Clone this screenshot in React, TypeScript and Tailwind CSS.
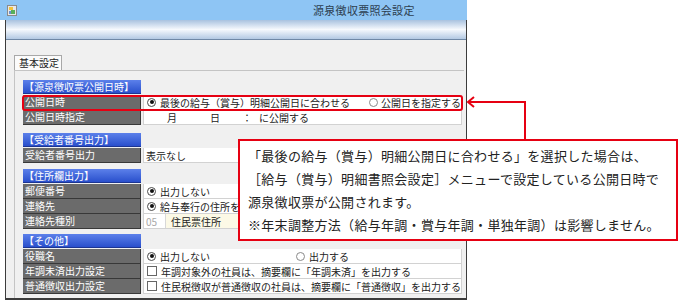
import React from 'react';

const Radio: React.FC<{ checked?: boolean }> = ({ checked }) => (
  <span
    className={`inline-flex items-center justify-center w-[9px] h-[9px] rounded-full border bg-white shrink-0 ${
      checked ? 'border-[#4a4a4a]' : 'border-[#8a8a8a]'
    }`}
  >
    {checked && <span className="w-[4px] h-[4px] rounded-full bg-[#111]" />}
  </span>
);

const Checkbox: React.FC = () => (
  <span className="inline-block w-[10px] h-[10px] border border-[#666] bg-white shrink-0" />
);

const SectionHeader: React.FC<{ title: string; className?: string }> = ({ title, className = '' }) => (
  <div
    className={`w-[118px] h-[14px] mb-[1px] bg-linear-to-b from-[#5c80ea] to-[#2a4fcc] border-b border-[#1c3592] text-white text-[10px] leading-[13px] pl-[1px] ${className}`}
  >
    {title}
  </div>
);

const Row: React.FC<{ label: string; children?: React.ReactNode }> = ({ label, children }) => (
  <div className="flex h-[15px]">
    <div className="w-[118px] bg-[#6b6b6b] border-b border-r border-[#383838] text-white text-[10px] leading-[14px] pl-[2px]">
      {label}
    </div>
    <div className="ml-[2px] w-[319px] bg-white border-b border-x border-[#d2d2d2] flex items-center text-[10px] text-[#222] whitespace-nowrap overflow-hidden">
      {children}
    </div>
  </div>
);

const AppIcon: React.FC = () => (
  <svg width="10" height="11" viewBox="0 0 10 11">
    <rect x="0.5" y="0.5" width="9" height="10" fill="#e8e8e8" stroke="#8a8a8a" />
    <rect x="2" y="2" width="4" height="3" fill="#f2c43c" />
    <rect x="4" y="5" width="4" height="4" fill="#58b05a" />
    <rect x="2" y="6" width="2" height="3" fill="#6a8fd0" />
  </svg>
);

export default function App() {
  return (
    <div className="relative w-[678px] h-[302px] bg-white overflow-hidden font-['Noto_Sans_CJK_JP','Noto_Sans',sans-serif]">
      <div className="w-[467px]">
        {/* Title bar */}
        <div className="h-[20px] bg-[#8ec5f4] flex items-center pl-[7px]">
          <AppIcon />
          <span className="ml-[296px] text-[11px] text-[#2c3e50] tracking-[0.3px]">源泉徴収票照会設定</span>
        </div>

        <div className="ml-[5px] w-[462px] h-[280px] border-x border-b-2 border-[#3c3c3c] bg-[#f0f0f0] flex flex-col">
          {/* Toolbar band */}
          <div className="h-[20px] bg-linear-to-b from-[#a9c2df] via-[#f6f9fd] to-[#b3c9e3] border-b border-[#6f88a6]" />

          <div className="flex-1 pl-[8px] pr-[2px] pt-[15px] flex flex-col">
            {/* Tab */}
            <div className="w-[48px] h-[15px] bg-[#fbfbfb] border-x border-t border-[#a8a8a8] text-[10px] leading-[14px] pl-[4px] text-[#222]">
              基本設定
            </div>

            <div className="flex-1 border-t border-l border-[#c4c4c4] pl-[8px] pt-[9px]">
              {/* 源泉徴収票公開日時 */}
              <SectionHeader title="【源泉徴収票公開日時】" />
              <Row label="公開日時">
                <div className="flex items-center pl-[3px] w-[229px]">
                  <Radio checked />
                  <span className="ml-[4px]">最後の給与（賞与）明細公開日に合わせる</span>
                </div>
                <Radio />
                <span className="ml-[3px]">公開日を指定する</span>
              </Row>
              <Row label="公開日時指定">
                <span className="pl-[23px] w-[66px]">月</span>
                <span className="w-[32px]">日</span>
                <span className="w-[17px]">：</span>
                <span>に公開する</span>
              </Row>

              {/* 受給者番号出力 */}
              <SectionHeader title="【受給者番号出力】" className="mt-[8px]" />
              <Row label="受給者番号出力">
                <span className="pl-[2px]">表示なし</span>
              </Row>

              {/* 住所欄出力 */}
              <SectionHeader title="【住所欄出力】" className="mt-[6px]" />
              <Row label="郵便番号">
                <div className="flex items-center pl-[3px]">
                  <Radio checked />
                  <span className="ml-[4px]">出力しない</span>
                </div>
              </Row>
              <Row label="連絡先">
                <div className="flex items-center pl-[3px]">
                  <Radio checked />
                  <span className="ml-[4px]">給与奉行の住所を</span>
                </div>
              </Row>
              <Row label="連絡先種別">
                <span className="pl-[2px] w-[21px] text-[#a8a8a8]">05</span>
                <div className="h-full w-[140px] bg-[#fcf9e6] border-l border-[#d8d8d8] pl-[5px] flex items-center">
                  住民票住所
                </div>
              </Row>

              {/* その他 */}
              <SectionHeader title="【その他】" className="mt-[5px]" />
              <Row label="役職名">
                <div className="flex items-center pl-[3px] w-[152px]">
                  <Radio checked />
                  <span className="ml-[4px]">出力しない</span>
                </div>
                <Radio />
                <span className="ml-[4px]">出力する</span>
              </Row>
              <Row label="年調未済出力設定">
                <span className="pl-[3px] flex items-center">
                  <Checkbox />
                </span>
                <span className="ml-[4px]">年調対象外の社員は、摘要欄に「年調未済」を出力する</span>
              </Row>
              <Row label="普通徴収出力設定">
                <span className="pl-[3px] flex items-center">
                  <Checkbox />
                </span>
                <span className="ml-[4px]">住民税徴収が普通徴収の社員は、摘要欄に「普通徴収」を出力する</span>
              </Row>
            </div>
          </div>
        </div>
      </div>

      {/* Highlight around 公開日時 row */}
      <div className="absolute left-[22px] top-[95px] w-[441px] h-[16px] border-2 border-[#e60012] rounded-[3px]" />

      {/* Arrow */}
      <svg className="absolute left-[463px] top-[95px]" width="66" height="46" viewBox="0 0 66 46">
        <path d="M5 7 H62 V46" fill="none" stroke="#e60012" strokeWidth="2" />
        <path d="M11 2 L5 7 L11 12" fill="none" stroke="#e60012" strokeWidth="2" />
      </svg>

      {/* Callout */}
      <div className="absolute left-[238px] top-[139px] w-[440px] h-[102px] border-2 border-[#e60012] bg-white pl-[8px] pt-[3px] text-[13px] leading-[23px] tracking-[0.3px] text-[#222] whitespace-nowrap">
        <div>「最後の給与（賞与）明細公開日に合わせる」を選択した場合は、</div>
        <div>［給与（賞与）明細書照会設定］メニューで設定している公開日時で</div>
        <div>源泉徴収票が公開されます。</div>
        <div>※年末調整方法（給与年調・賞与年調・単独年調）は影響しません。</div>
      </div>
    </div>
  );
}
